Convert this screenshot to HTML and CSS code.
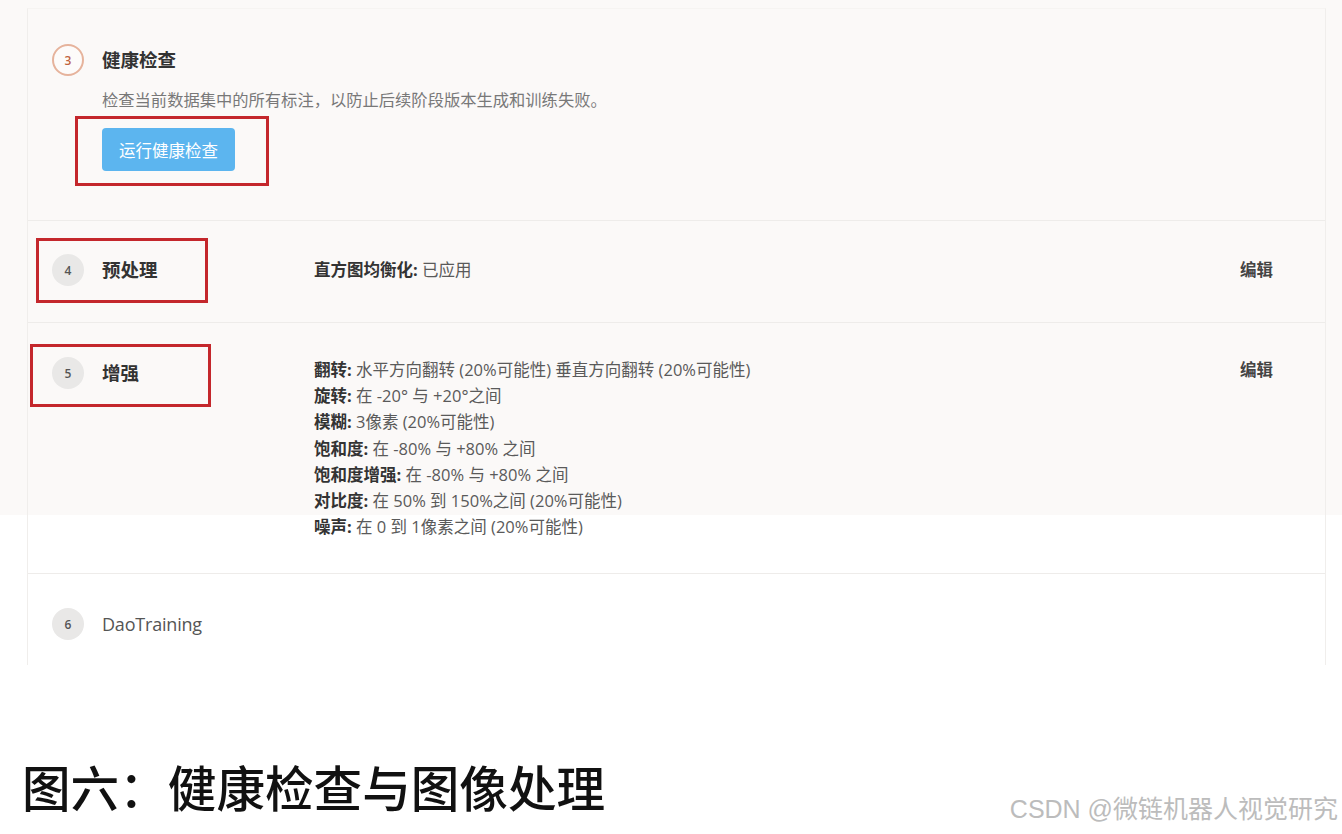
FILE: index.html
```html
<!DOCTYPE html>
<html lang="zh-CN">
<head>
<meta charset="utf-8">
<title>健康检查与图像处理</title>
<link rel="stylesheet" href="styles.css">
</head>
<body>
<div class="page">
  <section class="card">
    <div class="row row-health">
      <div class="step">
        <span class="num num-active">3</span>
        <div class="step-body">
          <h2 class="title">健康检查</h2>
          <p class="desc">检查当前数据集中的所有标注，以防止后续阶段版本生成和训练失败。</p>
          <button class="btn">运行健康检查</button>
        </div>
      </div>
      <span class="mark mark-1"></span>
    </div>

    <div class="row row-pre">
      <div class="step step-fixed">
        <span class="num">4</span>
        <h2 class="title">预处理</h2>
      </div>
      <div class="details">
        <div class="line"><b>直方图均衡化:</b> 已应用</div>
      </div>
      <a class="edit">编辑</a>
      <span class="mark mark-2"></span>
    </div>

    <div class="row row-aug">
      <div class="step step-fixed">
        <span class="num">5</span>
        <h2 class="title">增强</h2>
      </div>
      <div class="details">
        <div class="line"><b>翻转:</b> 水平方向翻转 (20%可能性) 垂直方向翻转 (20%可能性)</div>
        <div class="line"><b>旋转:</b> 在 -20° 与 +20°之间</div>
        <div class="line"><b>模糊:</b> 3像素 (20%可能性)</div>
        <div class="line"><b>饱和度:</b> 在 -80% 与 +80% 之间</div>
        <div class="line"><b>饱和度增强:</b> 在 -80% 与 +80% 之间</div>
        <div class="line"><b>对比度:</b> 在 50% 到 150%之间 (20%可能性)</div>
        <div class="line"><b>噪声:</b> 在 0 到 1像素之间 (20%可能性)</div>
      </div>
      <a class="edit">编辑</a>
      <span class="mark mark-3"></span>
    </div>

    <div class="row row-train">
      <div class="step step-fixed">
        <span class="num">6</span>
        <h2 class="title title-latin">DaoTraining</h2>
      </div>
    </div>
  </section>

  <footer class="footer">
    <div class="caption">图六：健康检查与图像处理</div>
    <div class="watermark">CSDN @微链机器人视觉研究</div>
  </footer>
</div>
</body>
</html>
```

FILE: styles.css
```css
* { box-sizing: border-box; }

html, body {
  margin: 0;
  padding: 0;
  background: #ffffff;
}

body {
  font-family: "Open Sans", "Noto Sans CJK SC", sans-serif;
  color: #333;
}

.page {
  width: 1342px;
  height: 834px;
  overflow: hidden;
  padding-top: 8px;
  background: linear-gradient(#fbf9f8 0, #fbf9f8 515px, #ffffff 515px);
}

.card {
  margin-left: 27px;
  width: 1299px;
  border-left: 1px solid #f0eeec;
  border-right: 1px solid #f0eeec;
  border-top: 1px solid #f6f4f2;
}

.row {
  position: relative;
  display: flex;
  align-items: flex-start;
  padding-left: 24px;
  padding-right: 52px;
  border-bottom: 1px solid #eeecea;
}

.row-health { height: 212px; padding-top: 35px; }
.row-pre    { height: 102px; padding-top: 33px; }
.row-aug    { height: 251px; padding-top: 34px; }
.row-train  { height: 91px;  padding-top: 34px; border-bottom: none; }

.step {
  display: flex;
  align-items: flex-start;
  gap: 18px;
}

.step-fixed { width: 262px; flex: none; }

.num {
  flex: none;
  width: 32px;
  height: 32px;
  border-radius: 50%;
  background: #e9e8e7;
  color: #555;
  font-size: 12px;
  font-weight: 600;
  display: flex;
  align-items: center;
  justify-content: center;
}

.num-active {
  background: #fdfbfa;
  border: 2px solid #e6b39c;
  color: #c0643f;
}

.title {
  margin: 0;
  font-size: 18.5px;
  line-height: 32px;
  font-weight: 700;
  color: #333;
}

.title-latin {
  font-weight: 500;
  color: #555;
  font-size: 18px;
  letter-spacing: -0.2px;
}

.desc {
  margin: 12px 0 16px;
  font-size: 16.3px;
  line-height: 24px;
  color: #787878;
}

.btn {
  display: block;
  width: 133px;
  height: 43px;
  border: none;
  border-radius: 4px;
  background: #5cb5ef;
  color: #ffffff;
  font-family: "Noto Sans CJK SC", sans-serif;
  font-size: 16.5px;
  padding: 0;
}

.details {
  flex: 1;
  font-size: 16.5px;
  line-height: 26.2px;
  color: #5a5a5a;
}

.row-pre .details { padding-top: 3px; }

.details b {
  font-weight: 700;
  color: #333;
}

.edit {
  flex: none;
  font-size: 16.5px;
  line-height: 26px;
  font-weight: 700;
  color: #444;
}

.row-pre .edit { padding-top: 3px; }

.mark {
  position: absolute;
  border: 3px solid #c4272c;
  pointer-events: none;
}

.mark-1 { left: 47px; top: 107px; width: 194px; height: 70px; }
.mark-2 { left: 8px;  top: 17px;  width: 172px; height: 65px; }
.mark-3 { left: 2px;  top: 21px;  width: 181px; height: 63px; }

.footer {
  display: flex;
  justify-content: space-between;
  align-items: flex-start;
  padding-top: 91px;
  padding-left: 22px;
  padding-right: 4px;
}

.caption {
  font-family: "Noto Sans CJK SC", sans-serif;
  font-size: 48.6px;
  line-height: 60px;
  font-weight: 500;
  color: #111;
}

.watermark {
  margin-top: 38px;
  font-family: "Liberation Sans", "Noto Sans CJK SC", sans-serif;
  font-size: 25px;
  line-height: 30px;
  font-weight: 400;
  color: #bcbcbc;
}
```
